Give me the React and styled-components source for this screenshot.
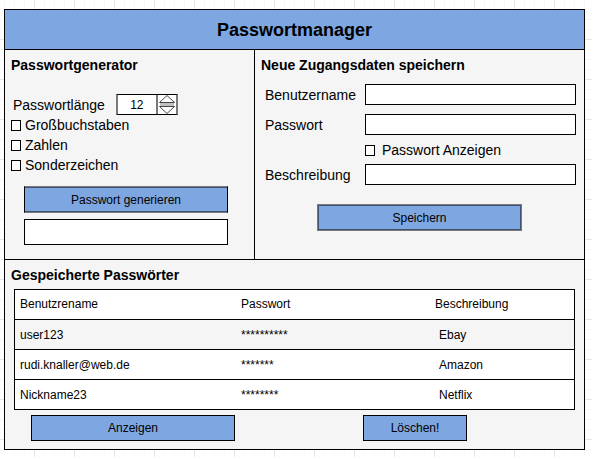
import React, { useState } from "react";
import styled, { createGlobalStyle } from "styled-components";

const GlobalStyle = createGlobalStyle`
  *, *::before, *::after { box-sizing: border-box; }
  body {
    margin: 0;
    background: #fff;
    color: #000;
    font-family: "Liberation Sans", Arial, sans-serif;
    font-size: 14px;
    line-height: 20px;
  }
`;

const Canvas = styled.div`
  margin: 0 3px 3px 0;
  padding: 9px 7px 7px 4px;
  background-color: #fff;
  background-image:
    linear-gradient(to right, #e6e6e6 1px, transparent 1px),
    linear-gradient(to bottom, #e6e6e6 1px, transparent 1px),
    linear-gradient(to right, #f8f8f8 1px, transparent 1px),
    linear-gradient(to bottom, #f8f8f8 1px, transparent 1px);
  background-size: 40px 40px, 40px 40px, 10px 10px, 10px 10px;
  background-position: 34px 39px, 34px 39px, 4px 9px, 4px 9px;
`;

const Panel = styled.main`
  border: 1px solid #000;
  background: #f5f5f5;
`;

const TitleBar = styled.header`
  display: flex;
  align-items: center;
  justify-content: center;
  min-height: 40px;
  border-bottom: 1px solid #000;
  background: #7ea6e0;
`;

const Title = styled.h1`
  margin: 0;
  font-size: 18px;
  line-height: 20px;
`;

const Columns = styled.div`
  display: grid;
  grid-template-columns: 250fr 329fr;
`;

const Section = styled.section`
  padding: 5px 0 14px;
  border-right: ${(p) => (p.$divided ? "1px solid #000" : "0")};
`;

const SavedSection = styled.section`
  padding: 5px 0 8px;
  border-top: 1px solid #000;
`;

const Heading = styled.h2`
  margin: 0 6px ${(p) => p.$gap}px;
  font-size: 14px;
  line-height: 20px;
`;

const LengthRow = styled.div`
  display: flex;
  align-items: center;
  gap: 11px;
  padding-left: 8px;
`;

const Stepper = styled.div`
  display: flex;
  height: 21px;
  border: solid;
  border-width: 1px 2px;
  border-color: #000 #7a7a7a;
  background: #fff;
`;

const NumberInput = styled.input`
  width: 38px;
  padding: 0;
  border: 0;
  background: transparent;
  font: 12px "Liberation Sans", Arial, sans-serif;
  text-align: center;
  appearance: textfield;
  &::-webkit-inner-spin-button,
  &::-webkit-outer-spin-button { appearance: none; margin: 0; }
`;

const StepButtons = styled.div`
  display: grid;
  grid-template-rows: 9px 9px;
  gap: 1px;
  width: 20px;
  border-left: 2px solid #7a7a7a;
`;

const StepButton = styled.button`
  display: flex;
  justify-content: center;
  padding: 0;
  border: 0;
  background: transparent;
`;

const StepDrawing = styled.svg`
  flex: none;
  overflow: visible;
`;

const CheckLabel = styled.label`
  display: flex;
  align-items: center;
  gap: ${(p) => p.$gap}px;
  min-height: 20px;
  padding-left: ${(p) => p.$indent}px;
`;

const CheckBox = styled.input`
  appearance: none;
  width: 10px;
  height: 11px;
  margin: 0;
  border: 1px solid #000;
  background: #fff;
  &:checked { background: #7ea6e0; }
`;

const TextInput = styled.input`
  width: 100%;
  min-width: 0;
  height: ${(p) => p.$height || 21}px;
  padding: 0 4px;
  border: 1px solid #000;
  border-radius: 0;
  background: #fff;
  font: 12px "Liberation Sans", Arial, sans-serif;
`;

const Button = styled.button`
  display: block;
  width: 100%;
  height: 26px;
  padding: 0;
  border: 1px solid #000;
  border-radius: 0;
  background: #7ea6e0;
  color: #000;
  font: 12px "Liberation Sans", Arial, sans-serif;
`;

const GenerateButton = styled(Button)`
  height: 27px;
  border-color: #7a7a7a #000;
  box-shadow: inset 0 1px #3f5370, inset 0 -1px #3f5370;
`;

const SaveButton = styled(Button)`
  height: 27px;
  border-color: #7a7a7a;
  box-shadow: inset 0 0 0 1px #3f5370;
`;

const GenerateArea = styled.div`
  display: grid;
  gap: 6px;
  padding: 11px 26px 0 19px;
`;

const SaveArea = styled.div`
  padding: 14px 62px 0;
`;

const FieldRow = styled.div`
  display: grid;
  grid-template-columns: 100px 1fr;
  align-items: center;
  padding: 4px 8px 5px 10px;
`;

const PasswordTable = styled.table`
  width: calc(100% - 18px);
  margin: 0 9px;
  border: 1px solid #000;
  border-bottom: 0;
  border-spacing: 0;
  table-layout: fixed;
  background: #fff;
  font-size: 12px;
`;

const Column = styled.col`
  width: ${(p) => p.$width};
`;

const HeadCell = styled.th`
  height: 30px;
  padding: 0 0 2px 5px;
  border-bottom: 1px solid #000;
  font-weight: 400;
  text-align: left;
`;

const Row = styled.tr`
  background: ${(p) => (p.$shaded ? "#f5f5f5" : "#fff")};
`;

const Cell = styled.td`
  height: 30px;
  padding: 0 0 0 5px;
  border-bottom: 1px solid #000;
  &:last-child { padding-left: 9px; }
`;

const Actions = styled.div`
  display: grid;
  grid-template-columns: 204fr 104fr;
  gap: 128px;
  padding: 5px 117px 0 26px;
`;

const entries = [
  { user: "user123", password: "**********", note: "Ebay", shaded: true },
  { user: "rudi.knaller@web.de", password: "*******", note: "Amazon" },
  { user: "Nickname23", password: "********", note: "Netflix" },
];

const options = ["Großbuchstaben", "Zahlen", "Sonderzeichen"];

function StepIcon({ down }) {
  return (
    <StepDrawing width="16" height="9" viewBox="0 0 16 9" aria-hidden="true">
      <g transform={down ? "matrix(1 0 0 -1 0 9)" : undefined}>
        <path d="M0.5 7.5 8 0.5 15.5 7.5Z" fill="#fff" stroke="#444" />
        <path d="M1 8H15V10H1Z" fill="#c0c0c0" />
      </g>
    </StepDrawing>
  );
}

function Field({ id, label, type = "text" }) {
  return (
    <FieldRow>
      <label htmlFor={id}>{label}</label>
      <TextInput id={id} type={type} />
    </FieldRow>
  );
}

export default function App() {
  const [length, setLength] = useState(12);
  const [visible, setVisible] = useState(false);

  return (
    <>
      <GlobalStyle />
      <Canvas>
        <Panel>
          <TitleBar>
            <Title>Passwortmanager</Title>
          </TitleBar>
          <Columns>
            <Section $divided>
              <Heading $gap={19}>Passwortgenerator</Heading>
              <LengthRow>
                <label htmlFor="length">Passwortlänge</label>
                <Stepper>
                  <NumberInput
                    id="length"
                    type="number"
                    value={length}
                    onChange={(e) => setLength(Number(e.target.value))}
                  />
                  <StepButtons>
                    <StepButton type="button" aria-label="Länger" onClick={() => setLength(length + 1)}>
                      <StepIcon />
                    </StepButton>
                    <StepButton type="button" aria-label="Kürzer" onClick={() => setLength(length - 1)}>
                      <StepIcon down />
                    </StepButton>
                  </StepButtons>
                </Stepper>
              </LengthRow>
              {options.map((name) => (
                <CheckLabel key={name} $gap={4} $indent={6}>
                  <CheckBox type="checkbox" />
                  {name}
                </CheckLabel>
              ))}
              <GenerateArea>
                <GenerateButton type="button">Passwort generieren</GenerateButton>
                <TextInput $height={26} readOnly aria-label="Generiertes Passwort" />
              </GenerateArea>
            </Section>
            <Section>
              <Heading $gap={5}>Neue Zugangsdaten speichern</Heading>
              <Field id="username" label="Benutzername" />
              <Field id="password" label="Passwort" type={visible ? "text" : "password"} />
              <CheckLabel $gap={7} $indent={110}>
                <CheckBox type="checkbox" checked={visible} onChange={() => setVisible(!visible)} />
                Passwort Anzeigen
              </CheckLabel>
              <Field id="note" label="Beschreibung" />
              <SaveArea>
                <SaveButton type="button">Speichern</SaveButton>
              </SaveArea>
            </Section>
          </Columns>
          <SavedSection>
            <Heading $gap={4}>Gespeicherte Passwörter</Heading>
            <PasswordTable>
              <colgroup>
                <Column $width="221px" />
                <Column $width="194px" />
                <Column $width="auto" />
              </colgroup>
              <thead>
                <tr>
                  <HeadCell scope="col">Benutzrename</HeadCell>
                  <HeadCell scope="col">Passwort</HeadCell>
                  <HeadCell scope="col">Beschreibung</HeadCell>
                </tr>
              </thead>
              <tbody>
                {entries.map((entry) => (
                  <Row key={entry.user} $shaded={entry.shaded}>
                    <Cell>{entry.user}</Cell>
                    <Cell>{entry.password}</Cell>
                    <Cell>{entry.note}</Cell>
                  </Row>
                ))}
              </tbody>
            </PasswordTable>
            <Actions>
              <Button type="button">Anzeigen</Button>
              <Button type="button">Löschen!</Button>
            </Actions>
          </SavedSection>
        </Panel>
      </Canvas>
    </>
  );
}
